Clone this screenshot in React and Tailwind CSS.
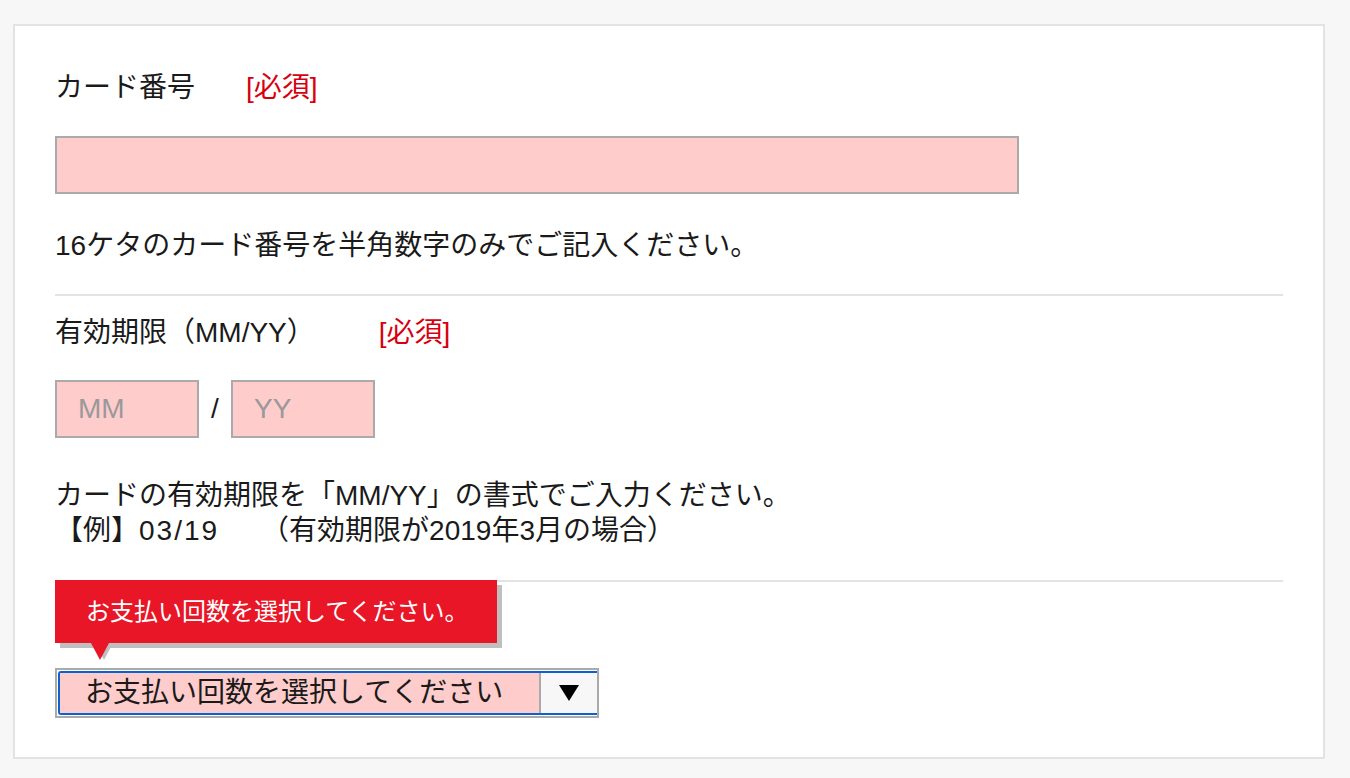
import React from 'react';

const font = { fontFamily: '"Liberation Sans", "Noto Sans CJK JP", sans-serif' };

const Required = ({ className = '' }) => (
  <span className={`text-[#d7000f] ${className}`}>[必須]</span>
);

const App = () => {
  return (
    <div className="min-h-screen bg-[#f7f7f7] pt-[24px] pb-[19px] pl-[13px]" style={font}>
      <div className="w-[1312px] border-2 border-[#e3e3e3] bg-white px-[40px] pt-[42px] pb-[39px] text-[28px] leading-[40px] text-[#1a1a1a]">
        {/* card number */}
        <div className="flex items-center">
          <span>カード番号</span>
          <Required className="ml-[51px]" />
        </div>
        <div className="mt-[28px] h-[58px] w-[964px] border-2 border-[#aaaaaa] bg-[#ffcccc]" />
        <p className="mt-[32px]">16ケタのカード番号を半角数字のみでご記入ください。</p>

        <div className="mt-[28px] h-[2px] bg-[#e3e3e3]" />

        {/* expiry */}
        <div className="mt-[17px] flex items-center">
          <span>有効期限（MM/YY）</span>
          <Required className="ml-[64px]" />
        </div>
        <div className="mt-[27px] flex items-center">
          <div className="flex h-[58px] w-[144px] items-center border-2 border-[#aaaaaa] bg-[#ffcccc] pl-[21px] text-[#999999]">
            MM
          </div>
          <span className="w-[32px] text-center">/</span>
          <div className="flex h-[58px] w-[144px] items-center border-2 border-[#aaaaaa] bg-[#ffcccc] pl-[21px] text-[#999999]">
            YY
          </div>
        </div>
        <div className="mt-[40px] leading-[35px]">
          <p>カードの有効期限を「MM/YY」の書式でご入力ください。</p>
          <p>
            【例】<span className="tracking-[2px]">03/19</span>
            <span className="ml-[42px]">（有効期限が2019年3月の場合）</span>
          </p>
        </div>

        <div className="mt-[32px] h-[2px] bg-[#e3e3e3]" />

        {/* installments */}
        <div className="relative pt-[86px]">
          <div className="absolute left-0 top-[-2px]">
            <div className="flex h-[63px] w-[442px] items-center bg-[#e81626] pl-[31px] text-[24px] text-white shadow-[5px_5px_0_#bfbfbf]">
              お支払い回数を選択してください。
            </div>
            <div className="absolute left-[40px] top-[63px] h-0 w-0 border-x-[9px] border-t-[17px] border-x-transparent border-t-[#bfbfbf]" />
            <div className="absolute left-[36px] top-[63px] h-0 w-0 border-x-[9px] border-t-[17px] border-x-transparent border-t-[#e81626]" />
          </div>
          <div className="flex h-[50px] w-[544px] border-2 border-[#aaaaaa] bg-white py-px pl-px">
            <div className="flex flex-1 rounded-l-[3px] border-y-2 border-l-2 border-[#0a62d0]">
              <div className="flex flex-1 items-center bg-[#ffcccc] pl-[25px]">お支払い回数を選択してください</div>
              <div className="flex w-[58px] items-center justify-center border-l-2 border-[#aaaaaa] bg-[#f7f7f7]">
                <svg width="20" height="16" viewBox="0 0 20 16">
                  <polygon points="0,0 20,0 10,16" fill="#000" />
                </svg>
              </div>
            </div>
          </div>
        </div>
      </div>
    </div>
  );
};

export default App;
